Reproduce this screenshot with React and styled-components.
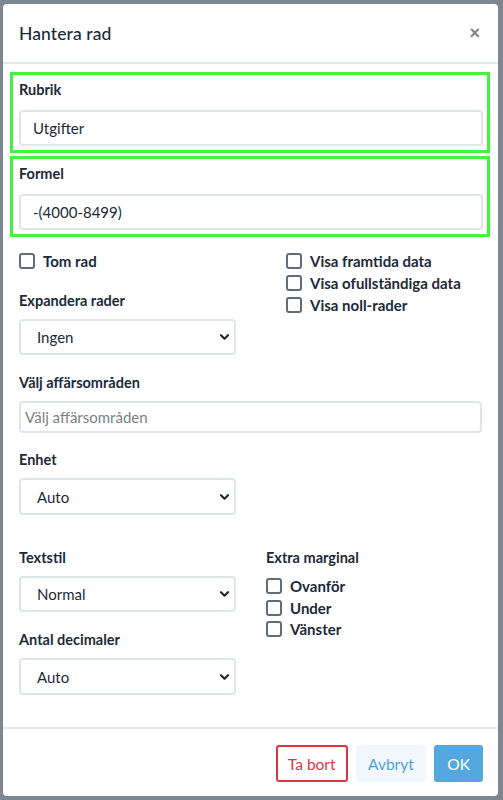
import React from 'react'
import styled, { createGlobalStyle } from 'styled-components'

const GlobalStyle = createGlobalStyle`
  body {
    margin: 0;
    background: #7d8791;
    font-family: Lato, "Open Sans", sans-serif;
    color: #1b2a38;
  }
`

const Page = styled.div`
  height: 800px;
  padding: 4px 5px 4px 3px;
  box-sizing: border-box;
`

const Modal = styled.div`
  background: #fff;
  border-radius: 4px;
  height: 792px;
  display: flex;
  flex-direction: column;
  box-sizing: border-box;
`

const Header = styled.div`
  height: 58px;
  padding: 0 16px;
  display: flex;
  align-items: center;
  justify-content: space-between;
  border-bottom: 2px solid #e3e7eb;
  flex-shrink: 0;
`

const Title = styled.h2`
  margin: 0;
  font-size: 17.5px;
  font-weight: 500;
  letter-spacing: 0.1px;
  color: #1b2a38;
`

const Close = styled.button`
  border: none;
  background: none;
  padding: 0;
  color: #7a858f;
  font-size: 18px;
  font-weight: 900;
  line-height: 1;
  margin-right: 2px;
  cursor: pointer;
`

const Body = styled.div`
  flex: 1;
  padding: 8px 16px 0 16px;
`

const Highlight = styled.div`
  border: 3px solid #44f244;
  margin: 0 -8px 0 -9px;
  padding: 5px 4px 4px 6px;
  & + & {
    margin-top: 3px;
  }
`

const Label = styled.div`
  font-size: 14.5px;
  font-weight: 700;
  height: 20px;
  line-height: 20px;
  margin-bottom: ${(p) => p.$gap ?? 8}px;
  margin-top: ${(p) => p.$top ?? 0}px;
`

const TextInput = styled.input`
  display: block;
  width: 100%;
  box-sizing: border-box;
  height: ${(p) => (p.$small ? 32 : 36)}px;
  border: 2px solid #dfe5ea;
  border-radius: 4px;
  padding: 0 ${(p) => (p.$small ? 4 : 12)}px;
  font-family: inherit;
  font-size: 15px;
  color: #1b2a38;
  outline: none;
  &::placeholder {
    color: #7b7f84;
  }
`

const TwoCols = styled.div`
  display: grid;
  grid-template-columns: 217px 1fr;
  column-gap: ${(p) => p.$gap}px;
  margin-top: ${(p) => p.$top}px;
  align-items: start;
`

const CheckRow = styled.label`
  display: flex;
  gap: 8px;
  height: ${(p) => p.$h ?? 22}px;
  align-items: flex-start;
  font-size: 15px;
  font-weight: 700;
  cursor: pointer;
`

const Box = styled.span`
  width: 16px;
  height: 16px;
  box-sizing: border-box;
  border: 2px solid #5f6c79;
  border-radius: 3px;
  flex-shrink: 0;
`

const CheckText = styled.span`
  line-height: 16px;
`

const SelectWrap = styled.div`
  position: relative;
  width: 217px;
`

const Select = styled.select`
  appearance: none;
  display: block;
  width: 100%;
  height: ${(p) => p.$h ?? 37}px;
  border: 2px solid #dfe5ea;
  border-radius: 4px;
  background: #fff;
  padding: 0 16px;
  font-family: inherit;
  font-size: 15px;
  color: #1b2a38;
  outline: none;
`

const Chevron = styled.svg`
  position: absolute;
  right: 6px;
  top: 50%;
  transform: translateY(-50%);
  pointer-events: none;
`

const Footer = styled.div`
  flex-shrink: 0;
  height: 69px;
  box-sizing: border-box;
  border-top: 2px solid #e3e7eb;
  display: flex;
  justify-content: flex-end;
  align-items: flex-start;
  padding: 16px 15px 0 0;
  gap: 8px;
`

const Button = styled.button`
  height: 37px;
  padding: 0 ${(p) => p.$pad}px;
  border-radius: 3px;
  font-family: inherit;
  font-size: 15.5px;
  cursor: pointer;
  border: 2px solid ${(p) => (p.$variant === 'danger' ? '#dc3545' : 'transparent')};
  background: ${(p) =>
    p.$variant === 'primary' ? '#55a8dd' : p.$variant === 'light' ? '#f1f7fc' : '#fff'};
  color: ${(p) =>
    p.$variant === 'primary' ? '#fff' : p.$variant === 'light' ? '#4ea3db' : '#dc3545'};
`

const Stack = styled.div`
  display: flex;
  flex-direction: column;
`

const Check = ({ children, h }) => (
  <CheckRow $h={h}>
    <Box />
    <CheckText>{children}</CheckText>
  </CheckRow>
)

const Dropdown = ({ value, h }) => (
  <SelectWrap>
    <Select $h={h} defaultValue={value}>
      <option>{value}</option>
    </Select>
    <Chevron width="11" height="8" viewBox="0 0 11 8">
      <path d="M2 2.2 L5.5 5.7 L9 2.2" fill="none" stroke="#1b2a38" strokeWidth="2.2" strokeLinecap="round" strokeLinejoin="round" />
    </Chevron>
  </SelectWrap>
)

const App = () => {
  return (
    <>
      <GlobalStyle />
      <Page>
        <Modal>
          <Header>
            <Title>Hantera rad</Title>
            <Close>×</Close>
          </Header>
          <Body>
            <Highlight>
              <Label $gap={10}>Rubrik</Label>
              <TextInput defaultValue="Utgifter" />
            </Highlight>
            <Highlight>
              <Label $gap={10}>Formel</Label>
              <TextInput defaultValue="-(4000-8499)" />
            </Highlight>

            <TwoCols $gap={50} $top={16}>
              <Stack>
                <Check>Tom rad</Check>
                <Label $top={16}>Expandera rader</Label>
                <Dropdown value="Ingen" h={36} />
              </Stack>
              <Stack>
                <Check>Visa framtida data</Check>
                <Check>Visa ofullständiga data</Check>
                <Check>Visa noll-rader</Check>
              </Stack>
            </TwoCols>

            <Label $top={18}>Välj affärsområden</Label>
            <TextInput $small placeholder="Välj affärsområden" />

            <Label $top={17}>Enhet</Label>
            <Dropdown value="Auto" />

            <TwoCols $gap={30} $top={33}>
              <Stack>
                <Label>Textstil</Label>
                <Dropdown value="Normal" h={36} />
                <Label $top={18}>Antal decimaler</Label>
                <Dropdown value="Auto" />
              </Stack>
              <Stack>
                <Label $gap={10}>Extra marginal</Label>
                <Check h={21.5}>Ovanför</Check>
                <Check h={21.5}>Under</Check>
                <Check h={21.5}>Vänster</Check>
              </Stack>
            </TwoCols>
          </Body>
          <Footer>
            <Button $variant="danger" $pad={10}>Ta bort</Button>
            <Button $variant="light" $pad={10.5}>Avbryt</Button>
            <Button $variant="primary" $pad={11}>OK</Button>
          </Footer>
        </Modal>
      </Page>
    </>
  )
}

export default App
